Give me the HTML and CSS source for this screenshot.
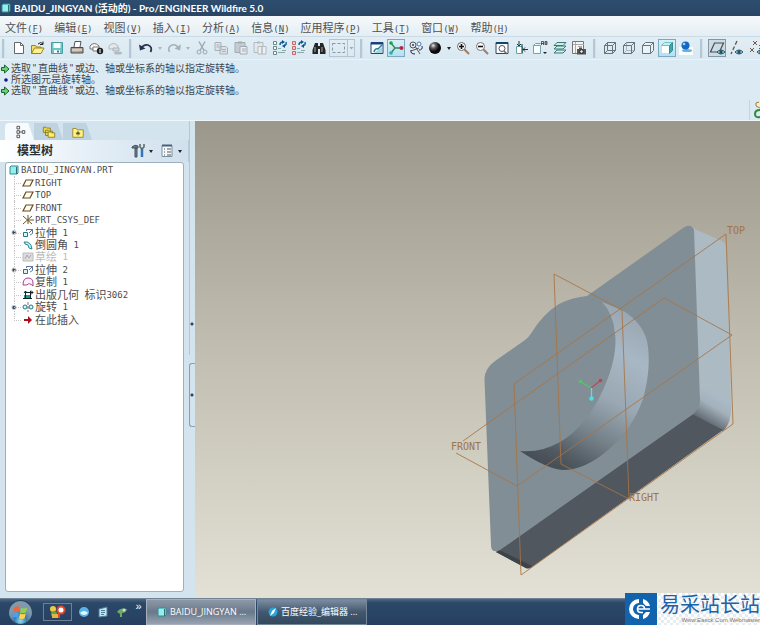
FILE: index.html
```html
<!DOCTYPE html>
<html lang="zh-CN">
<head>
<meta charset="utf-8">
<title>BAIDU_JINGYAN (活动的) - Pro/ENGINEER Wildfire 5.0</title>
<link rel="stylesheet" href="styles.css">
</head>
<body>
<svg class="defs" aria-hidden="true">
  <symbol id="plane" viewBox="0 0 12 10"><path d="M4 2h7L8 8H1z" fill="#fffdf0" stroke="#6a4a20" stroke-width="1.2"/></symbol>
  <symbol id="extrude" viewBox="0 0 12 10"><path d="M1.500 4.500h4v4h-4z" fill="#d8f6f6" stroke="#277"/><path d="M4.500 3V1.500h6v4L8 7M7 5l3.500-3.500" fill="none" stroke="#358" stroke-width=".8"/></symbol>
  <symbol id="arrow" viewBox="0 0 10 10"><path d="M1.500 3.500h3V1L9 5 4.500 9V6.500h-3z" fill="#6fd07a" stroke="#14622a"/></symbol>
  <symbol id="part" viewBox="0 0 10 10"><path d="M1 2l1-1h7v7L8 9H1z" fill="#8ff0ee" stroke="#3a8a92"/><path d="M7.500 2v7" stroke="#2d7078"/></symbol>
  <symbol id="eye" viewBox="0 0 8 6"><path d="M0 3q4-4 8 0q-4 4-8 0z" fill="#bfe0e6" stroke="#245663"/><circle cx="4" cy="3" r="1.700" fill="#164f66"/></symbol>
</svg>

<header class="titlebar"><svg class="ic10"><use href="#part"/></svg><h1>BAIDU_JINGYAN (活动的) - Pro/ENGINEER Wildfire 5.0</h1></header>

<nav class="menubar">
  <a href="#">文件<span class="lat">(<u>F</u>)</span></a>
  <a href="#">编辑<span class="lat">(<u>E</u>)</span></a>
  <a href="#">视图<span class="lat">(<u>V</u>)</span></a>
  <a href="#">插入<span class="lat">(<u>I</u>)</span></a>
  <a href="#">分析<span class="lat">(<u>A</u>)</span></a>
  <a href="#">信息<span class="lat">(<u>N</u>)</span></a>
  <a href="#">应用程序<span class="lat">(<u>P</u>)</span></a>
  <a href="#">工具<span class="lat">(<u>T</u>)</span></a>
  <a href="#">窗口<span class="lat">(<u>W</u>)</span></a>
  <a href="#">帮助<span class="lat">(<u>H</u>)</span></a>
</nav>

<div class="toolbar" role="toolbar">
  <i class="sep"></i>
  <div class="group g-file">
    <button aria-label="新建"><svg viewBox="0 0 16 16"><path d="M3.500 2.500h6l3 3v8h-9z" fill="#fff" stroke="#666"/><path d="M9.500 2.500v3h3" fill="none" stroke="#666"/></svg></button>
    <button aria-label="打开"><svg viewBox="0 0 16 16"><path d="M1.500 13.500v-8h4l1 1.500H11v2" fill="#f5e36b" stroke="#9a8420"/><path d="M1.500 13.500l3-5.500h9.500l-3 5.500z" fill="#fff18e" stroke="#9a8420"/><path d="M8 4q3-3 5 0m0-2.500V4.500h-3" fill="none" stroke="#222"/></svg></button>
    <button aria-label="保存"><svg viewBox="0 0 16 16"><path d="M2.500 2.500h11v11h-11z" fill="#6cc6c2" stroke="#4b9ca0"/><path d="M4.500 3h7v5h-7zM5 10h6v3H5z" fill="#f4ffff"/><path d="M8 10.500h2v2H8z" fill="#367b82"/></svg></button>
    <button aria-label="打印"><svg viewBox="0 0 16 16"><path d="M5 7l1-5.500h6L11 7" fill="#fff" stroke="#555"/><path d="M2 7.500h12v5.500H2z" fill="#b2a89a" stroke="#4e4b4a"/><path d="M3 10h10" stroke="#eee"/><path d="M10 11.500h3" stroke="#bd9b22"/></svg></button>
    <button aria-label="快速打印"><svg viewBox="0 0 16 16"><path d="M2 9V6q4-5 9 0v3z" fill="#f5f5f5" stroke="#777"/><path d="M5 7h6v4H5z" fill="#fff" stroke="#777"/><circle cx="12" cy="11" r="3.200" fill="#222"/><path d="M12 9v4" stroke="#fff"/></svg></button>
    <button aria-label="发送"><svg viewBox="0 0 16 16"><path d="M2 9V6q4-5 9 0v3z" fill="#e3e8ec" stroke="#b1b7bd"/><path d="M6 8h6v3H6z" fill="#d2d8dd" stroke="#adb4ba"/><ellipse cx="11" cy="13" rx="4" ry="1.500" fill="#b1bac2"/></svg></button>
  </div>
  <i class="sep"></i>
  <div class="group g-edit">
    <button aria-label="撤消"><svg viewBox="0 0 16 16"><path d="M3 8q3-4 7-3 5 2 2.500 7" fill="none" stroke="#29314f" stroke-width="1.800"/><path d="M1 4.500l1 6 5.500-2z" fill="#29314f"/></svg></button>
    <button class="caret off" aria-label="撤消列表"></button>
    <button aria-label="重做"><svg viewBox="0 0 16 16"><path d="M13 8q-3-4-7-3-5 2-2.500 7" fill="none" stroke="#a5b1bb" stroke-width="1.600"/><path d="M15 4.500l-1 6-5.500-2z" fill="#a5b1bb"/></svg></button>
    <button class="caret off" aria-label="重做列表"></button>
    <button aria-label="剪切"><svg viewBox="0 0 16 16"><path d="M5 1.500l5 9M11 1.500l-5 9" stroke="#9ba8b2" stroke-width="1.400"/><circle cx="5" cy="12" r="2" fill="none" stroke="#9ba8b2"/><circle cx="11" cy="12" r="2" fill="none" stroke="#9ba8b2"/></svg></button>
    <button aria-label="复制"><svg viewBox="0 0 16 16"><path d="M2 2.500h6v8H2zM7 6.500h6l1.500 1.500v6H7z" fill="#dce3e8" stroke="#a9b1b8"/><path d="M3.500 5h3M3.500 7h3M9 9.500h4M9 11.500h4" stroke="#a9b1b8"/></svg></button>
    <button aria-label="粘贴"><svg viewBox="0 0 16 16"><path d="M2 2.500h10v10H2z" fill="#c5ccd1" stroke="#a3abb2"/><path d="M5 1.500h4v2H5z" fill="#a3abb2"/><path d="M7 6.500h7v7.500H7z" fill="#e9edf0" stroke="#a3abb2"/><path d="M9 9h4M9 11h4" stroke="#a3abb2"/></svg></button>
    <button aria-label="选择性粘贴"><svg viewBox="0 0 16 16"><path d="M2 2.500h9v10H2z" fill="#e2e7eb" stroke="#b3bac0"/><path d="M5 1.500h3v2H5z" fill="#b3bac0"/><path d="M6 6.500h4v7.500H6zM10 6.500h4v7.500h-4z" fill="#eef1f3" stroke="#b3bac0"/></svg></button>
    <button aria-label="再生"><svg viewBox="0 0 16 16"><path d="M1.500 1.500h3v3h-3zM1.500 6.500h3v3h-3zM1.500 11.500h3v3h-3z" fill="#fff" stroke="#688"/><path d="M6 8.500h3M6 12.500h7M10 10.500h4" stroke="#8aa"/><path d="M8 5q0-3 3-3M14 2q1 3-2 4" fill="none" stroke="#169" stroke-width="1.500"/><path d="M10 0l3 2-3 2zM13 4l-3 2 3 2z" fill="#158"/></svg></button>
    <button aria-label="再生管理器"><svg viewBox="0 0 16 16"><path d="M1.500 1.500h3v3h-3zM1.500 6.500h3v3h-3zM1.500 11.500h3v3h-3z" fill="#ffc8c8" stroke="#c66"/><path d="M6 8.500h3M6 12.500h7M10 10.500h4" stroke="#8aa"/><path d="M8 5q0-3 3-3M14 2q1 3-2 4" fill="none" stroke="#169" stroke-width="1.500"/><path d="M10 0l3 2-3 2zM13 4l-3 2 3 2z" fill="#158"/></svg></button>
    <button aria-label="查找"><svg viewBox="0 0 16 16"><path d="M4 3h3v3h2V3h3l2.500 7v4H9V9H7v5H1.500v-4z" fill="#252525"/><path d="M4 7v5M11 7v5" stroke="#aaa"/></svg></button>
    <button class="combo" aria-label="选取框"><svg viewBox="0 0 25 16"><path d="M2.500 3.500h12v9h-12z" fill="none" stroke="#8798a5" stroke-dasharray="3 2"/><path d="M17.500 0v16" stroke="#b5c4ce"/><path d="M19.500 7h4l-2 2.500z" fill="#9daab5"/></svg></button>
  </div>
  <i class="sep"></i>
  <div class="group g-view">
    <button aria-label="重画"><svg viewBox="0 0 16 16"><path d="M2 2.500h12v11H2z" fill="#f7feff" stroke="#26477a"/><path d="M2 3.500h12" stroke="#193e7a" stroke-width="2"/><path d="M5 12q1-4 4-3l4-4" fill="none" stroke="#287b91" stroke-width="1.500"/><path d="M5 13h8V7z" fill="#a2d8dd"/></svg></button>
    <button class="on" aria-label="旋转中心"><svg viewBox="0 0 16 16"><path d="M3 3l4 5h6M3 13l4-5" fill="none" stroke="#398455" stroke-width="1.300"/><circle cx="3" cy="3" r="1.800" fill="#19a344"/><circle cx="3" cy="13" r="1.800" fill="#27b2b1"/><circle cx="13.500" cy="8" r="2" fill="#c22344"/></svg></button>
    <button aria-label="定向模式"><svg viewBox="0 0 16 16"><circle cx="5" cy="5" r="3" fill="none" stroke="#555"/><circle cx="11" cy="4" r="2" fill="#fff" stroke="#47a"/><path d="M3 11l8-3M7 6l5 8" stroke="#555"/><path d="M11 10q4 0 3-4M3 10q-1 4 4 4" fill="none" stroke="#226"/><circle cx="5" cy="5" r="1" fill="#246"/></svg></button>
    <button aria-label="外观库"><svg viewBox="0 0 16 16"><defs><radialGradient id="ball" cx=".35" cy=".3"><stop stop-color="#eee"/><stop offset=".4" stop-color="#666"/><stop offset="1" stop-color="#080808"/></radialGradient></defs><circle cx="8" cy="8" r="6" fill="url(#ball)"/></svg></button>
    <button class="caret" aria-label="外观列表"></button>
    <button aria-label="放大"><svg viewBox="0 0 16 16"><path d="M9.500 9.500l4.500 4.500" stroke="#a27b61" stroke-width="2"/><circle cx="6.500" cy="6.500" r="4" fill="#fff" stroke="#666"/><path d="M4 6.500h5M6.500 4v5" stroke="#111" stroke-width="1.600"/></svg></button>
    <button aria-label="缩小"><svg viewBox="0 0 16 16"><path d="M9.500 9.500l4.500 4.500" stroke="#a27b61" stroke-width="2"/><circle cx="6.500" cy="6.500" r="4" fill="#fff" stroke="#777"/><path d="M4 6.500h5" stroke="#111" stroke-width="1.600"/></svg></button>
    <button aria-label="重新调整"><svg viewBox="0 0 16 16"><path d="M2 2.500h12v11H2z" fill="#f7fcff" stroke="#345"/><path d="M2 3h12" stroke="#146" stroke-width="2"/><circle cx="8" cy="8.500" r="3" fill="#fff" stroke="#555"/><path d="M10 11l3 3" stroke="#765" stroke-width="1.500"/></svg></button>
    <button aria-label="重定向"><svg viewBox="0 0 16 16"><path d="M3.500 6.500h6v7h-6z" fill="#fff" stroke="#66a1a5"/><path d="M6 1v5m-2-2l2 2 2-2M15 9.500h-5m2-2l-2 2 2 2M9 4v9" fill="none" stroke="#233"/></svg></button>
    <button aria-label="已命名视图"><svg viewBox="0 0 16 16"><path d="M1.500 5.500h7v8h-7zM1.500 5.500l2-2h5M8.500 5.500v8" fill="#f5ffff" stroke="#7ba3a7"/><path d="M9.500 5V1.500h2V5M9.500 3.500h2M13 1.500v3h2v-3zM13 3h2" fill="none" stroke="#333" stroke-width=".8"/><path d="M11 12h4l-2 2z" fill="#222"/></svg></button>
    <button aria-label="层"><svg viewBox="0 0 16 16"><path d="M2 13l3-3h9l-3 3zM2 9l3-3h9l-3 3zM2 5.500l3-3h9l-3 3z" fill="#c8f2e9" stroke="#3e7476"/></svg></button>
    <button aria-label="视图管理器"><svg viewBox="0 0 16 16"><path d="M1.500 1.500h11v12h-11z" fill="#f4f4f1" stroke="#757575"/><path d="M4.500 2v11M2 4.500h11M7 6.500h4" stroke="#aaa"/><path d="M6 9h9v5.500H6zM8 7.500h3V9H8z" fill="#555"/><circle cx="10.500" cy="11.500" r="1.800" fill="#eee" stroke="#222"/></svg></button>
  </div>
  <i class="sep"></i>
  <div class="group g-shade">
    <button aria-label="线框"><svg viewBox="0 0 16 16"><path d="M2.500 5.500h8v8h-8zM5.500 2.500h8v8h-8zM2.500 5.500l3-3M10.500 5.500l3-3M10.500 13.500l3-3M2.500 13.500l3-3" fill="none" stroke="#66737c"/></svg></button>
    <button aria-label="隐藏线"><svg viewBox="0 0 16 16"><path d="M5.500 3v7.500h8M2.500 13.500l3-3" fill="none" stroke="#aab6be"/><path d="M2.500 5.500h8v8h-8zM2.500 5.500l3-3h8v8l-3 3M10.500 5.500l3-3" fill="none" stroke="#66737c"/></svg></button>
    <button aria-label="消隐"><svg viewBox="0 0 16 16"><path d="M2.500 5.500h8v8h-8zM2.500 5.500l3-3h8v8l-3 3M10.500 5.500l3-3" fill="#eaf3f7" stroke="#66737c"/></svg></button>
    <button class="on" aria-label="着色"><svg viewBox="0 0 16 16"><path d="M2.500 5.500h8v8h-8z" fill="#fff" stroke="#b5e5e9"/><path d="M2.500 5.500l3-3h8l-3 3z" fill="#baf3f4" stroke="#77bfc6"/><path d="M10.500 5.500l3-3v8l-3 3z" fill="#38aaa9" stroke="#398e94"/></svg></button>
    <button aria-label="增强的真实感"><svg viewBox="0 0 16 16"><path d="M1 7h14v8H1z" fill="#fafdff"/><ellipse cx="9" cy="10.500" rx="5" ry="1.500" fill="#62b1e2"/><circle cx="7.500" cy="5.500" r="4" fill="#1767c4"/><circle cx="6" cy="4" r="1.300" fill="#99d5ff"/></svg></button>
  </div>
  <i class="sep"></i>
  <div class="group g-datum">
    <button class="on grey" aria-label="平面显示"><svg viewBox="0 0 16 16"><path d="M5.500 3h9l-4 9h-9z" fill="none" stroke="#4b4b4b" stroke-width="1.200"/><use href="#eye" x="8" y="9" width="8" height="6"/></svg></button>
    <button aria-label="轴显示"><svg viewBox="0 0 16 16"><path d="M8 1L2 14" stroke="#6a5340" stroke-width="1.300" stroke-dasharray="4 2"/><use href="#eye" x="6" y="9" width="8" height="6"/></svg></button>
    <button aria-label="点显示"><svg viewBox="0 0 16 16"><path d="M4 1l4 4m0-4L4 5M1 8l4 4m0-4l-4 4M10 5l4 4m0-4l-4 4" stroke="#765542"/><use href="#eye" x="8" y="9" width="8" height="6"/></svg></button>
  </div>
</div>

<section class="messages">
  <p><svg class="ic10"><use href="#arrow"/></svg>选取<span class="lat">"</span>直曲线<span class="lat">"</span>或边、轴或坐标系的轴以指定旋转轴。</p>
  <p><svg class="ic10" viewBox="0 0 10 10"><circle cx="6" cy="5" r="1.800" fill="#14148c"/></svg>所选图元是旋转轴。</p>
  <p><svg class="ic10"><use href="#arrow"/></svg>选取<span class="lat">"</span>直曲线<span class="lat">"</span>或边、轴或坐标系的轴以指定旋转轴。</p>
  <div class="filter"><svg viewBox="0 0 8 20"><path d="M7 2L4 3v3l4 2" fill="#fff2bb" stroke="#8f7f54"/><path d="M8 10q-5 0-5 4t5 3" fill="none" stroke="#2d8c38" stroke-width="2"/></svg></div>
</section>

<main>
  <aside class="navigator">
    <div class="side">
      <div class="tabs" role="tablist">
        <button class="tab current" role="tab" aria-label="模型树"><svg viewBox="0 0 16 16"><path d="M4.500 1.500h3v3h-3zM4.500 6.500h3v3h-3zM4.500 11.500h3v3h-3zM10.500 6.500h3v3h-3zM8 8h2" fill="#fff" stroke="#444"/></svg></button>
        <button class="tab" role="tab" aria-label="文件夹浏览器"><svg viewBox="0 0 16 16"><path d="M1.500 2.500h3l1 1h4v5h-8zM4 6h3l1 1h4v5H4z" fill="#e8d94e" stroke="#8c7b22"/><path d="M7 8h3l1 1h3.500v5H7z" fill="#fff06b" stroke="#8c7b22"/></svg></button>
        <button class="tab" role="tab" aria-label="收藏夹"><svg viewBox="0 0 16 16"><path d="M2 4h4l1 1.500h7V14H2z" fill="#fff486" stroke="#9b8423"/><path d="M8 7v5M5.500 9.500h5M6.500 8l3 3m0-3l-3 3" stroke="#554b14"/></svg></button>
      </div>
      <div class="sidehead">
        <h2>模型树</h2>
        <button aria-label="设置"><svg viewBox="0 0 16 16"><path d="M2 4q3-3 6-1v2H2zM5 5h2v9H5z" fill="#6e8291" stroke="#415261"/><path d="M12 6v8" stroke="#3473bd" stroke-width="2.500"/><path d="M10 1v3l2 2 2-2V1" fill="none" stroke="#566" stroke-width="1.500"/></svg></button><i class="tri"></i>
        <button aria-label="显示"><svg viewBox="0 0 16 16"><path d="M3 2.500h10v11H3z" fill="#f4f8fc" stroke="#7c8fa3"/><path d="M3 2.500h10" stroke="#46617c" stroke-width="2"/><path d="M5 6h1M8 6h4M5 9h1M8 9h4M5 12h1M8 12h4" stroke="#555"/></svg></button><i class="tri"></i>
      </div>
      <div class="treebox">
        <ul class="tree">
          <li class="root"><svg><use href="#part"/></svg><span class="lat">BAIDU_JINGYAN.PRT</span></li>
          <li><svg><use href="#plane"/></svg><span class="lat">RIGHT</span></li>
          <li><svg><use href="#plane"/></svg><span class="lat">TOP</span></li>
          <li><svg><use href="#plane"/></svg><span class="lat">FRONT</span></li>
          <li><svg viewBox="0 0 12 10"><path d="M1 1l9 8M10 1L1 9M6 0v9M6 5h6" stroke="#6b5225"/></svg><span class="lat">PRT_CSYS_DEF</span></li>
          <li class="plus"><svg><use href="#extrude"/></svg>拉伸<span class="lat">&nbsp;1</span></li>
          <li><svg viewBox="0 0 12 10"><path d="M2 2q7-1 8 7L7 8Q7 4 3 4z" fill="#b8f4f2" stroke="#2b8790"/></svg>倒圆角<span class="lat">&nbsp;1</span></li>
          <li class="dim"><svg viewBox="0 0 12 10"><path d="M1 1h10v8H1z" fill="#ddd" stroke="#bbb"/><path d="M3 7l2-4 2 3 2-3" fill="none" stroke="#aaa"/></svg>草绘<span class="lat">&nbsp;1</span></li>
          <li class="plus"><svg><use href="#extrude"/></svg>拉伸<span class="lat">&nbsp;2</span></li>
          <li><svg viewBox="0 0 12 10"><path d="M1 8Q1 1 6 1t5 5v3Q7 5 5 8z" fill="#fff0fb" stroke="#a1488f"/></svg>复制<span class="lat">&nbsp;1</span></li>
          <li><svg viewBox="0 0 12 10"><path d="M2 5h6v4H2z" fill="#299"/><path d="M3.500 1v7M8.500 1v7M3 2.500h8M1 8.500h9M9 .5l2 2-2 2M2 3l1.500-2L5 3" fill="none" stroke="#122"/></svg>出版几何<span class="lat">&nbsp;</span>标识<span class="lat">3062</span></li>
          <li class="plus"><svg viewBox="0 0 12 10"><path d="M6 0v10" stroke="#777" stroke-dasharray="3 1"/><circle cx="3" cy="5" r="2" fill="#d4f7f7" stroke="#278"/><circle cx="9" cy="5" r="2" fill="#d4f7f7" stroke="#278"/></svg>旋转<span class="lat">&nbsp;1</span></li>
          <li><svg viewBox="0 0 12 10"><path d="M2 4h4V1l4 4-4 4V6H2z" fill="#b00d1c"/></svg>在此插入</li>
        </ul>
      </div>
    </div>
    <div class="sash"><i class="rail"></i><i class="grip"></i></div>
  </aside>

  <div class="canvas">
    <svg viewBox="195 121 565 477" preserveAspectRatio="xMaxYMin meet" role="img" aria-label="零件模型">
      <defs>
        <linearGradient id="corner" gradientUnits="userSpaceOnUse" x1="722" y1="398" x2="705" y2="427"><stop stop-color="#abbac5"/><stop offset=".35" stop-color="#a3b1bc"/><stop offset="1" stop-color="#50575e"/></linearGradient>
        <linearGradient id="disc" gradientUnits="userSpaceOnUse" x1="635" y1="310" x2="550" y2="470"><stop stop-color="#96a5af"/><stop offset=".25" stop-color="#a8b7c4"/><stop offset=".5" stop-color="#9aa8b3"/><stop offset=".72" stop-color="#76828a"/><stop offset=".9" stop-color="#505860"/><stop offset="1" stop-color="#454c53"/></linearGradient>
      </defs>
      <path fill="#abbac3" d="M688 225Q691 225 695 229L722 241Q726 243 726 247L731 408Q731 424 723 430L691 416Z"/>
      <path fill="url(#corner)" d="M701 385L731 400Q732 424 723 431L690 416Q701 409 701 385Z"/>
      <path fill="#50575e" d="M692 414L723 430L532 567Q528 570 524 567L496 552Z"/>
      <path fill="#3d4449" d="M496 552L499 550L532 566Q528 570 524 567Z"/>
      <path fill="#828e95" d="M484.500 380Q484 369 495 361L525 340Q529 337 532 332Q543 314 559 304Q573 297 587 296L683 228Q691 222 694 230L700 400Q700 409 692 415L500 550Q491 554 491 545Z"/>
      <path fill="url(#disc)" d="M602 302L622 310Q642 322 647 341Q652 366 643 399Q632 430 608 450Q585 470 563 470Q547 469 520 451Q541 453 560 442Q586 427 603 390Q618 357 615 333Q613 313 602 302Z"/>
      <g fill="none" stroke="#a87343" stroke-width="1" stroke-opacity=".85">
        <path d="M554 274L622 310L629 499L561 464Z"/>
        <path d="M726 234L733 424L521 575L514 384Z"/>
        <path d="M463 441L664 298L732 335L517 486L456 453"/>
      </g>
      <g stroke-width="1.300" fill="none"><path d="M591 388L581 382" stroke="#54c66b"/><path d="M591 388L600 381" stroke="#b84c55"/><path d="M591.500 388V398" stroke="#63dce0"/></g>
      <circle cx="580.500" cy="381.500" r="1.800" fill="#4dc867"/><circle cx="600.500" cy="380.500" r="1.800" fill="#bd4350"/><circle cx="591.500" cy="398.500" r="2.200" fill="#48e3ea"/>
      <g class="datum"><text x="727" y="234">TOP</text><text x="451" y="450">FRONT</text><text x="629" y="501">RIGHT</text></g>
    </svg>
  </div>
</main>

<footer class="taskbar">
  <button class="start" aria-label="开始"><svg viewBox="0 0 24 24"><defs><radialGradient id="orb" cx=".5" cy=".85"><stop stop-color="#8fdcf5"/><stop offset=".5" stop-color="#3c7cab"/><stop offset="1" stop-color="#8199ad"/></radialGradient></defs><circle cx="12" cy="12" r="11.500" fill="url(#orb)" stroke="#24415c"/><path d="M6 7q3-2 5.500 0l-1 4.500q-3-1.500-5.500 0z" fill="#f0653a"/><path d="M12.500 7.500q3 1.500 6 0l-1.500 4.500q-3 1.500-5.500 0z" fill="#93cf4c"/><path d="M5 12.500q3-1.500 5.500 0l-1 4.500q-3-1.500-5.500 0z" fill="#4c9fe8"/><path d="M11.500 13q3 1.500 5.500 0l-1 4.500q-3 1.500-5.500 0z" fill="#ffd247"/></svg></button>
  <button class="pinned" aria-label="输入法"><svg viewBox="0 0 18 14"><circle cx="4" cy="4" r="3" fill="#eecb41"/><circle cx="5" cy="9" r="3" fill="#58a949"/><path d="M3 9h6v4H3z" fill="#e4b33a"/><circle cx="12" cy="5" r="3.500" fill="#fff" stroke="#e3462f" stroke-width="2"/><path d="M10 8v5" stroke="#e3462f" stroke-width="2"/></svg></button>
  <button class="quick" aria-label="浏览器"><svg viewBox="0 0 12 12"><circle cx="6" cy="6" r="5" fill="#59b3e8"/><path d="M2 7q4-4 8 0q-4 4-8 0z" fill="#e4f7ff"/></svg></button>
  <button class="quick" aria-label="桌面"><svg viewBox="0 0 12 12"><path d="M2 3l8-2v9l-8 1z" fill="#c9e2ed" stroke="#497e9c"/><path d="M4 4.500h4M4 6.500h4M4 8.500h3" stroke="#4b7d9a"/></svg></button>
  <button class="quick" aria-label="工具"><svg viewBox="0 0 12 12"><path d="M1 6q3-5 10-3-1 4-5 4v4H4V8z" fill="#70a86a"/><circle cx="8" cy="4" r="1.500" fill="#c7e6b7"/></svg></button>
  <span class="more">»</span>
  <button class="task active"><svg class="ic10"><use href="#part"/></svg>BAIDU_JINGYAN ...</button>
  <button class="task"><svg class="ic10" viewBox="0 0 10 10"><circle cx="5" cy="5" r="4.500" fill="#2aa2dc"/><path d="M8 1L6 6 2 9 4 4z" fill="#fff"/></svg>百度经验_编辑器 ...</button>
  <div class="mark">
    <svg viewBox="0 0 32 32"><path d="M0 0h32v32H0z" fill="#1163ae"/><path d="M14 6a10 10 0 0 0 0 20v-4a6 6 0 0 1 0-12zM18 6a10 10 0 0 1 7 7h-4l-3-3zM25 19a10 10 0 0 1-7 7v-4l3-3z" fill="#fff"/><path d="M12 16h13M19.500 16q0-3.500-3.500-3.500t-3.500 3.500 3.500 3.500h2" fill="none" stroke="#fff" stroke-width="1.600"/></svg>
    <div class="marktext"><strong>易采站长站</strong><small>Www.Easck.Com Webmaster</small></div>
  </div>
</footer>
</body>
</html>
```
FILE: styles.css
```css
* { box-sizing: border-box; }
html, body { height: 100%; }
body {
  margin: 0;
  display: flex;
  flex-direction: column;
  overflow: hidden;
  background: #dceaf4;
  color: #333;
  font: 11px/12px "Liberation Sans", "Noto Sans CJK SC", sans-serif;
}
button { border: 0; padding: 0; margin: 0; background: none; color: inherit; font: inherit; }
h1, h2, p, ul { margin: 0; padding: 0; }
svg { flex: none; display: block; }
.defs { position: absolute; width: 0; height: 0; }
.ic10 { width: 10px; height: 10px; }
.lat { font-family: "DejaVu Sans Mono", monospace; font-size: 9px; }

.titlebar {
  flex: none;
  display: flex;
  align-items: center;
  gap: 3px;
  height: 16px;
  padding-left: 1px;
  background: linear-gradient(#2d4e70, #2a4564);
  color: #fff;
}
.titlebar h1 { font: bold 10px/16px Lato, "Noto Sans CJK SC", sans-serif; white-space: nowrap; }

.menubar {
  flex: none;
  display: flex;
  align-items: center;
  gap: 11px;
  height: 21px;
  padding: 4px 5px 0;
  background: linear-gradient(#f6f9fb, #e4eef4);
  border-bottom: 1px solid #cbdbe5;
}
.menubar a { color: #505050; text-decoration: none; white-space: nowrap; }

.toolbar {
  flex: none;
  display: flex;
  align-items: center;
  gap: 5px;
  height: 23px;
  padding-left: 2px;
  background: linear-gradient(#e2eef5, #d9e8f1);
  border-bottom: 1px solid #e8f2f8;
}
.sep { flex: none; width: 3px; height: 19px; background: #b3c7d6; border-right: 1px solid #d3e1eb; }
.group { flex: none; display: flex; align-items: center; justify-content: space-between; }
.g-file { width: 114px; }
.g-edit { width: 218px; }
.g-view { width: 220px; }
.g-shade { width: 94px; }
.g-datum { width: 58px; }
.group button { flex: none; width: 18px; height: 18px; display: grid; place-items: center; border: 1px solid transparent; }
.group button svg { width: 16px; height: 16px; }
.group .on { background: linear-gradient(#d9f0f8, #b2e1f2); border-color: #7fa8bd; }
.group .grey { background: #ccdce6; border-color: #8497a5; }
.group .caret { width: 7px; border: 0; }
.caret::before, .tri {
  content: "";
  border: 2px solid transparent;
  border-top: 3px solid #223;
  border-bottom: 0;
}
.caret.off::before { border-top-color: #a9b6c0; }
.group .combo { width: 26px; border-color: #b5c4ce; }
.group .combo svg { width: 25px; height: 16px; }

.messages {
  flex: none;
  position: relative;
  height: 61px;
  padding-top: 3px;
  color: #40464c;
  font-size: 10px;
  line-height: 11px;
  border-bottom: 1px solid #eef6fb;
}
.messages p { display: flex; align-items: center; height: 11px; white-space: nowrap; }
.messages p .lat { width: 7px; text-align: center; }
.messages .ic10 { margin-right: 1px; }
.filter { position: absolute; right: 0; bottom: 0; padding-left: 2px; border-left: 1px solid #c2d4e0; }
.filter svg { width: 8px; height: 20px; }

main { flex: 1; min-height: 0; display: flex; }
.navigator { flex: none; width: 195px; display: flex; background: #d3e4ef; }
.side { flex: 1; min-width: 0; display: flex; flex-direction: column; }
.tabs { flex: none; display: flex; height: 19px; padding: 2px 0 0 5px; }
.tab { width: 29px; display: grid; place-items: center; background: #bdd3e1; clip-path: polygon(0 0, 80% 0, 100% 100%, 0 100%); }
.tab svg { width: 14px; height: 14px; }
.tab.current { background: #f7fbfd; border-radius: 4px 0 0 0; }
.sidehead {
  flex: none;
  display: flex;
  align-items: center;
  gap: 3px;
  height: 22px;
  padding: 0 3px 0 17px;
  background: linear-gradient(90deg, #fff, #e4eef6 50%, #d0e0ec);
  border-right: 1px solid #b8cbd8;
}
.sidehead h2 { flex: 1; font-size: 12px; line-height: 20px; font-weight: bold; color: #2c3136; }
.sidehead button svg { width: 16px; height: 16px; }
.tri { margin-right: 3px; }
.treebox {
  flex: 1;
  min-height: 0;
  margin: 0 5px 6px 5px;
  padding: 1px 3px;
  background: #fff;
  border: 1px solid #9eb0bb;
  border-radius: 3px;
}
.tree { position: relative; display: grid; grid-auto-rows: 1fr; height: 162px; list-style: none; color: #4c4c4c; }
.tree li { position: relative; display: flex; align-items: center; padding-left: 13px; white-space: nowrap; }
.tree li svg { width: 12px; height: 10px; margin-right: 1px; }
.tree li.root { padding-left: 0; }
.tree li.root svg { width: 10px; margin-right: 2px; }
.tree li:not(.root)::before { content: ""; position: absolute; left: 5px; top: 0; width: 6px; height: 50%; border-left: 1px dotted #c5c5c5; border-bottom: 1px dotted #c5c5c5; }
.tree li:not(.root):not(:last-child)::after { content: ""; position: absolute; left: 5px; top: 50%; bottom: 0; border-left: 1px dotted #c5c5c5; }
.tree li.plus { background: radial-gradient(circle 3px at 5px 50%, #345 1px, #bcc8cf 2px, transparent 3px); }
.tree .dim { color: #bbb; }

.sash { flex: none; width: 6px; display: grid; grid-template-rows: 234px 64px 1fr; row-gap: 8px; }
.rail, .grip { border-left: 1px solid #b3c8d7; background: radial-gradient(circle 2px at 2px 50%, #345 1px, transparent 2px); }
.rail { background-position: 0 86px; background-repeat: no-repeat; }
.grip { border: 1px solid #8a9fb5; border-right: 0; border-radius: 3px 0 0 3px; }

.canvas { flex: 1; min-width: 0; background: linear-gradient(#9b978a, #bfbcaf 45%, #e3e1d5); }
.canvas svg { width: 100%; height: 100%; }
.datum { font: 10px "DejaVu Sans Mono", monospace; fill: #a07446; }

.taskbar {
  flex: none;
  position: relative;
  display: flex;
  align-items: center;
  height: 27px;
  background: linear-gradient(#4d6682, #2b4868 15%, #263f60);
  border-top: 1px solid #6e8294;
  color: #fff;
}
.start { margin: 0 10px 0 8px; }
.start svg { width: 25px; height: 25px; }
.pinned { width: 29px; height: 18px; display: grid; place-items: center; border: 1px solid #6e7f91; margin-right: 2px; }
.pinned svg { width: 18px; height: 14px; }
.quick { width: 19px; display: grid; place-items: center; }
.quick svg { width: 12px; height: 12px; }
.more { width: 15px; margin: 0 0 12px; text-align: center; }
.task {
  display: flex;
  align-items: center;
  gap: 3px;
  width: 110px;
  height: 26px;
  margin-right: 1px;
  padding-left: 10px;
  background: linear-gradient(#7c8c9f, #42586f 50%, #33495f);
  border: 1px solid #75879a;
  font-family: "Open Sans", "Noto Sans CJK SC", sans-serif;
  font-size: 9px;
  white-space: nowrap;
}
.task.active { background: linear-gradient(#8d98a6, #69798b 50%, #98a3b0); border-color: #a6b1bd; }
.mark {
  position: absolute;
  right: 0;
  bottom: 0;
  display: flex;
  width: 135px;
  height: 32px;
  background: repeating-conic-gradient(#e8edf0 0 25%, #fff 0 50%) 0 0 / 6px 6px;
}
.mark > svg { width: 32px; height: 32px; }
.marktext { flex: 1; display: flex; flex-direction: column; padding-left: 3px; white-space: nowrap; }
.marktext strong { color: #1c62a8; font-size: 20px; line-height: 24px; font-weight: 400; }
.marktext small { color: #8a7468; font-size: 6px; line-height: 6px; text-align: right; }
```
